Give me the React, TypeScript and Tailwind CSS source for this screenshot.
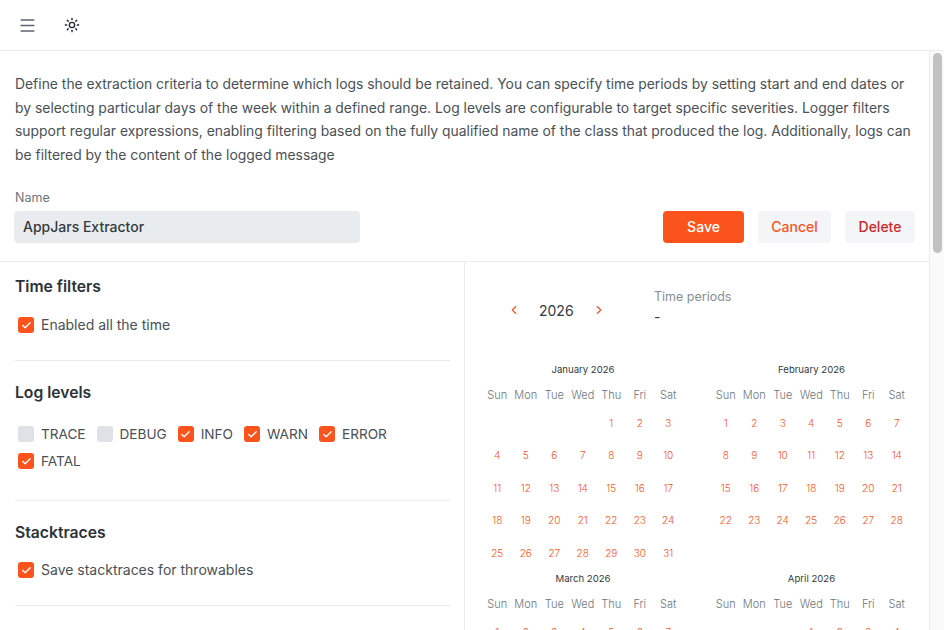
import { Menu, Sun, ChevronLeft, ChevronRight, Check } from "lucide-react";

const DAYS = ["Sun", "Mon", "Tue", "Wed", "Thu", "Fri", "Sat"];

function Box({ on }: { on: boolean }) {
  return (
    <span className={`flex h-4 w-4 shrink-0 items-center justify-center rounded-[3px] ${on ? "bg-[#fa541c]" : "bg-[#dee2e6]"}`}>
      {on && <Check size={11} strokeWidth={3} className="text-white" />}
    </span>
  );
}

function Field({ label, on, caps }: { label: string; on: boolean; caps?: boolean }) {
  return (
    <label className={`flex items-center gap-[7px] leading-[20px] text-[#495057] ${caps ? "text-[13.6px]" : "text-[14px]"}`}>
      <Box on={on} />
      {label}
    </label>
  );
}

function Month({ name, start, count }: { name: string; start: number; count: number }) {
  const cells: (number | null)[] = [
    ...Array.from({ length: start }, () => null),
    ...Array.from({ length: count }, (_, i) => i + 1),
  ];
  return (
    <div className="w-[200px]">
      <div className="h-[16px] text-center text-[9.6px] leading-[16px] text-[#343a40]">{name}</div>
      <div className="mt-[9px] grid grid-cols-[repeat(7,28.5px)] text-center text-[11px] font-light leading-[16px] text-[#6c757d]">
        {DAYS.map((d) => (
          <div key={d}>{d}</div>
        ))}
      </div>
      <div className="mt-[4px] grid grid-cols-[repeat(7,28.5px)] auto-rows-[32.4px] text-center text-[10px] font-light leading-[32px] text-[#fa541c]">
        {cells.map((c, i) => (
          <div key={i}>{c}</div>
        ))}
      </div>
    </div>
  );
}

function Section({ title, children }: { title: string; children: React.ReactNode }) {
  return (
    <section className="border-b border-[#e9ecef]">
      <h2 className="pt-[1px] text-[15.7px] font-semibold leading-[24px] text-[#2b3138]">{title}</h2>
      {children}
    </section>
  );
}

export default function App() {
  return (
    <div className="flex h-screen flex-col overflow-hidden bg-white font-['Inter','Noto_Sans',sans-serif]">
      <header className="flex h-[51px] shrink-0 items-center gap-[27px] border-b border-[#e9ecef] pl-[18px]">
        <Menu size={19} strokeWidth={2} className="text-[#5c6670]" />
        <Sun size={16} strokeWidth={2} className="text-[#212529]" />
      </header>
      <div className="flex min-h-0 flex-1">
        <main className="min-w-0 flex-1 overflow-hidden">
          <div className="border-b border-[#e9ecef] pl-[14px] pr-[14px] pt-[22px]">
            <p className="pl-[1px] text-[13.9px] leading-[23.5px] text-[#495057]">
              Define the extraction criteria to determine which logs should be retained. You can specify time periods by setting start and end dates or by selecting particular days of the week within a defined range. Log levels are configurable to target specific severities. Logger filters support regular expressions, enabling filtering based on the fully qualified name of the class that produced the log. Additionally, logs can be filtered by the content of the logged message
            </p>
            <div className="mt-[22px] flex items-end pb-[18px]">
              <div className="w-[346px]">
                <div className="pl-[1px] text-[12.5px] leading-[18px] text-[#6c757d]">Name</div>
                <div className="mt-[4px] flex h-[32px] items-center rounded-[4px] bg-[#e9ecef] px-[9px] pb-[1px] text-[14px] font-[450] text-[#343a40]">AppJars Extractor</div>
              </div>
              <div className="ml-auto flex gap-[14px]">
                <button className="h-[32px] w-[81px] rounded-[4px] bg-[#fa541c] pb-[1px] text-[14px] font-medium text-white">Save</button>
                <button className="h-[32px] w-[73px] rounded-[4px] bg-[#f4f5f7] pb-[1px] text-[14px] font-[450] text-[#fa541c]">Cancel</button>
                <button className="h-[32px] w-[70px] rounded-[4px] bg-[#f4f5f7] pb-[1px] text-[14px] font-[450] text-[#c92a2a]">Delete</button>
              </div>
            </div>
          </div>
          <div className="flex">
            <div className="w-[465px] shrink-0 border-r border-[#e9ecef] pl-[15px] pr-[14px] pt-[12px]">
              <Section title="Time filters">
                <div className="mt-[16px] pb-[25px] pl-[3px]">
                  <Field label="Enabled all the time" on />
                </div>
              </Section>
              <div className="pt-[19px]">
                <Section title="Log levels">
                  <div className="mt-[19px] flex flex-wrap gap-x-[11px] gap-y-[7px] pb-[29px] pl-[3px]">
                    <Field caps label="TRACE" on={false} />
                    <Field caps label="DEBUG" on={false} />
                    <Field caps label="INFO" on />
                    <Field caps label="WARN" on />
                    <Field caps label="ERROR" on />
                    <Field caps label="FATAL" on />
                  </div>
                </Section>
              </div>
              <div className="pt-[19px]">
                <Section title="Stacktraces">
                  <div className="mt-[15px] pb-[25px] pl-[3px]">
                    <Field label="Save stacktraces for throwables" on />
                  </div>
                </Section>
              </div>
            </div>
            <div className="min-w-0 flex-1 pl-[18px] pt-[25px]">
              <div className="flex">
                <div className="mt-[13px] flex h-[20px] w-[135px] items-center pl-[24px] text-[#fa541c]">
                  <ChevronLeft size={14} strokeWidth={2} />
                  <span className="mx-[18px] text-[14px] text-[#343a40]">2026</span>
                  <ChevronRight size={14} strokeWidth={2} />
                </div>
                <div className="ml-[36px] mt-[1px]">
                  <div className="text-[12.5px] leading-[18px] text-[#868e96]">Time periods</div>
                  <div className="mt-[1px] text-[14px] leading-[20px] text-[#343a40]">-</div>
                </div>
              </div>
              <div className="mt-[35px] grid grid-cols-[228.5px_200px] gap-y-[2px]">
                <Month name="January 2026" start={4} count={31} />
                <Month name="February 2026" start={0} count={28} />
                <Month name="March 2026" start={0} count={31} />
                <Month name="April 2026" start={3} count={30} />
              </div>
            </div>
          </div>
        </main>
        <aside className="w-[15px] shrink-0 border-l border-[#ececec] bg-[#fafafa] pt-[2px]">
          <div className="ml-[3px] h-[200px] w-[9px] rounded-full bg-[#c1c1c1]" />
        </aside>
      </div>
    </div>
  );
}
